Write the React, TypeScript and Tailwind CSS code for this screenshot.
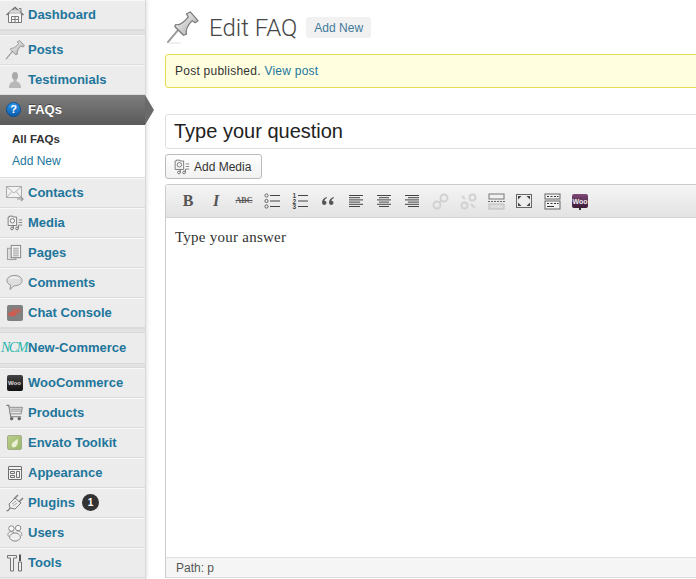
import React from "react";

const S = ({ children, size = 20, vb = "0 0 20 20", className = "" }: { children: React.ReactNode; size?: number; vb?: string; className?: string }) => (
  <svg width={size} height={size} viewBox={vb} className={className} fill="none">{children}</svg>
);

const G = "#7a7a7a";
const Pin = ({ big }: { big?: boolean }) => (
  <S size={big ? 33 : 20} vb="0 0 34 34">
    <defs>
      <linearGradient id={big ? "pb" : "ps"} x1="0" y1="0" x2="1" y2="1">
        <stop offset="0" stopColor="#f8f8f8" />
        <stop offset="1" stopColor="#a8a8a8" />
      </linearGradient>
    </defs>
    <path d="M2 32 L13 19" stroke="#9a9a9a" strokeWidth="2" strokeLinecap="round" />
    <path d="M10 14 C14 15 19 11 23 6 L21 3 L25 1 L33 10 L30 12 L27 10 C23 14 20 19 21 24 L18 25 L9 16 Z" fill={`url(#${big ? "pb" : "ps"})`} stroke="#777" strokeWidth="1.2" strokeLinejoin="round" />
    <path d="M2 33 H15" stroke="#ddd" strokeWidth="1" />
  </S>
);

const icons: Record<string, React.ReactNode> = {
  dashboard: (
    <S size={18} vb="0 0 18 18">
      <path d="M0.5 9 L9 1.5 L17.5 9" stroke="#707070" strokeWidth="1.4" />
      <path d="M5 4 L9 4 L13 4 L15 7 H3 Z" fill="#ddd" stroke="#999" strokeWidth="0.6" />
      <path d="M2.5 8 V16.5 H15.5 V8" stroke={G} fill="#f7f7f7" />
      <path d="M5.5 16.5 V10.5 H12.5 V16.5 M9 10.5 V16.5 M5.5 13.5 H12.5" stroke={G} />
      <path d="M13 2.5 H15 V6" stroke={G} />
    </S>
  ),
  testimonials: (
    <S size={18} vb="0 0 18 18">
      <ellipse cx="9" cy="5" rx="3" ry="4" fill="#a9a9a9" />
      <path d="M7.5 8 V10.5 C4 11.5 3 13.5 3 17 H15 C15 13.5 14 11.5 10.5 10.5 V8 Z" fill="#b8b8b8" />
    </S>
  ),
  faq: (
    <div className="flex h-[15px] w-[15px] items-center justify-center rounded-full border border-[#0a4f96] bg-gradient-to-b from-[#2f97e8] to-[#0b5db0] text-[11px] font-bold leading-none text-white">?</div>
  ),
  contacts: (
    <S size={18} vb="0 0 18 18">
      <rect x="0.5" y="2.5" width="15" height="11" fill="#f2f2f2" stroke="#aaa" />
      <path d="M1 3 L8 9 L15 3 M1 13 L6 7.5 M15 13 L10 7.5" stroke="#b5b5b5" />
      <path d="M11 15 H17 M15 13 L17 15 L15 17" stroke="#999" strokeWidth="1.2" />
    </S>
  ),
  media: (
    <S size={17} vb="0 0 20 20">
      <path d="M2.5 3.5 H4 V2.5 H8 V3.5 H12.5 V13.5 H2.5 Z" stroke="#6e6e6e" fill="#f3f3f3" />
      <circle cx="7.5" cy="8" r="2.6" stroke="#6e6e6e" />
      <path d="M15 7 H19 M15 10 H19 M15 13 H19" stroke="#777" />
      <circle cx="7" cy="17" r="1.6" stroke="#666" />
      <circle cx="13" cy="17" r="1.6" stroke="#666" />
      <path d="M8.6 17 V13 M14.6 17 V13" stroke="#666" />
    </S>
  ),
  pages: (
    <S size={17} vb="0 0 18 18">
      <rect x="1.5" y="4.5" width="9" height="12" fill="#ddd" stroke="#999" />
      <rect x="5.5" y="1.5" width="10" height="13" fill="#f5f5f5" stroke="#808080" />
      <path d="M7.5 4.5 H13.5 M7.5 6.5 H13.5 M7.5 8.5 H13.5 M7.5 10.5 H13.5 M7.5 12.5 H13.5" stroke="#999" />
    </S>
  ),
  comments: (
    <S size={17} vb="0 0 18 18">
      <path d="M9 1.5 C4.5 1.5 1 3.8 1 7 C1 9.3 2.8 10.9 4.8 11.7 L4.2 16.5 L8.5 12.5 C13.5 12.5 17 10.2 17 7 C17 3.8 13.5 1.5 9 1.5 Z" fill="#dedede" stroke="#8f8f8f" />
      <path d="M4 5 C6 3.5 11 3.5 14 5" stroke="#fff" />
    </S>
  ),
  chat: (
    <div className="flex h-[16px] w-[16px] items-center justify-center rounded-[2px] bg-[#808080]">
      <S size={15} vb="0 0 14 14">
        <ellipse cx="8.5" cy="5.5" rx="4.5" ry="2.3" fill="#b9675e" />
        <ellipse cx="5" cy="8.5" rx="4" ry="2" fill="#cf5a4f" />
      </S>
    </div>
  ),
  woo: (
    <div className="flex h-[16px] w-[16px] items-center justify-center rounded-[2px] bg-gradient-to-b from-[#444] to-[#111] text-[6px] font-bold leading-none text-[#ddd]">Woo</div>
  ),
  products: (
    <S size={17} vb="0 0 18 18">
      <path d="M0.5 1.5 H3 L5 13.5 H16" stroke="#777" strokeWidth="1.2" />
      <path d="M3.5 3.5 H17.5 L16 10.5 H4.5 Z" fill="#e4e4e4" stroke="#8a8a8a" />
      <path d="M5 5.5 H16.5 M5 7.5 H16" stroke="#999" />
      <circle cx="6" cy="15.5" r="1.8" fill="#666" />
      <circle cx="14" cy="15.5" r="1.8" fill="#666" />
    </S>
  ),
  envato: (
    <div className="flex h-[15px] w-[15px] items-center justify-center rounded-[2px] border border-[#a3ad8c] bg-gradient-to-br from-[#b8cc8a] to-[#9bb868]">
      <S size={10} vb="0 0 10 10">
        <path d="M7.5 0.5 C8.5 4 7.5 9 4 9.5 C1.5 9.5 1 7 2.5 5 C4 3 6.5 2.5 7.5 0.5 Z" fill="#eaf0d6" />
      </S>
    </div>
  ),
  appearance: (
    <S size={16} vb="0 0 16 16">
      <rect x="1.5" y="1.5" width="13" height="13" rx="0.5" fill="#f3f3f3" stroke="#6e6e6e" />
      <path d="M1.5 4.5 H14.5" stroke="#6e6e6e" />
      <path d="M3.5 6.5 H7.5 V8.5 H3.5 Z M3.5 10.5 H7.5 V12.5 H3.5 Z M9.5 6.5 H12.5 V12.5 H9.5 Z" stroke="#6e6e6e" />
    </S>
  ),
  plugins: (
    <S size={18} vb="0 0 18 18">
      <path d="M0.5 17 C2 17 3 16 4 14" stroke="#777" strokeWidth="1.2" />
      <path d="M4 14 L3 10 L9 4 L15 9 L9 15 Z" fill="#eee" stroke="#808080" />
      <path d="M8 5 L12 1 M13 8 L17 4" stroke="#808080" strokeWidth="1.5" />
      <path d="M6 10 L10 7 M7 12 L11 9" stroke="#aaa" />
    </S>
  ),
  users: (
    <S size={18} vb="0 0 20 20">
      <circle cx="6" cy="5" r="3" fill="#fafafa" stroke="#808080" />
      <circle cx="13.5" cy="4.5" r="3" fill="#fafafa" stroke="#808080" />
      <path d="M3 14 C1 11 3 8.5 6 8.5 C7 8.5 8 8.8 9 9.5 M12 8 C15 7.5 18 9 17.5 13" stroke="#808080" fill="#f5f5f5" />
      <ellipse cx="10" cy="14.5" rx="6" ry="4.5" fill="#eee" stroke="#808080" />
    </S>
  ),
  tools: (
    <S size={18} vb="0 0 18 18">
      <path d="M1.5 1.5 H10.5 V4 H7.5 V17 H4.5 V4 H1.5 Z" fill="#f0f0f0" stroke="#757575" />
      <path d="M13 0.5 H15 V7 H13 Z" fill="#555" />
      <path d="M12.5 8 H15.5 V17 H12.5 Z" fill="#eee" stroke="#707070" />
    </S>
  ),
};

type Item = { label: string; icon: React.ReactNode; badge?: string };

const Row = ({ label, icon, badge }: Item) => (
  <div className="flex h-[30px] items-center border-t border-b border-t-[#f8f8f8] border-b-[#dcdcdc] bg-[#ececec] pb-px">
    <span className="flex w-[28px] shrink-0 items-center justify-center pl-px">{icon}</span>
    <span className="text-[13px] font-bold leading-none text-[#21759b]">{label}</span>
    {badge && (
      <span className="ml-[7px] flex h-[17px] w-[17px] items-center justify-center rounded-full bg-[#333] text-[10px] font-bold leading-none text-white">{badge}</span>
    )}
  </div>
);

const Sep = () => <div className="h-[5px] border-y border-[#d9d9d9] bg-[#e3e3e3]" />;

const Sidebar = () => (
  <aside className="relative w-[146px] shrink-0 border-r border-r-[#d8d8d8] bg-[#ececec] shadow-[1px_0_4px_rgba(0,0,0,0.12)]">
    <Row label="Dashboard" icon={icons.dashboard} />
    <Sep />
    <Row label="Posts" icon={<Pin />} />
    <Row label="Testimonials" icon={icons.testimonials} />
    <div className="relative flex h-[30px] items-center bg-gradient-to-b from-[#7d7d7d] to-[#5a5a5a] pb-px pl-[6px]">
      <span className="flex w-[22px] shrink-0 items-center">{icons.faq}</span>
      <span className="text-[13px] font-bold leading-none text-white [text-shadow:0_-1px_0_rgba(0,0,0,0.4)]">FAQs</span>
      <span className="absolute left-[145px] top-0 h-0 w-0 border-y-[15px] border-l-[9px] border-y-transparent border-l-[#6a6a6a]" />
    </div>
    <div className="flex h-[53px] flex-col border-b border-b-[#dcdcdc] bg-white pl-[12px] pt-[3px] text-[12px] leading-[22px]">
      <span className="text-[11.5px] font-bold text-[#333]">All FAQs</span>
      <span className="text-[#21759b]">Add New</span>
    </div>
    <Row label="Contacts" icon={icons.contacts} />
    <Row label="Media" icon={icons.media} />
    <Row label="Pages" icon={icons.pages} />
    <Row label="Comments" icon={icons.comments} />
    <Row label="Chat Console" icon={icons.chat} />
    <Sep />
    <div className="flex h-[30px] items-center bg-[#ececec] pb-px">
      <span className="w-[28px] shrink-0 pl-px font-['Liberation_Serif',serif] text-[14px] italic leading-none tracking-[-1.5px] text-[#1fb5ad]">NCM</span>
      <span className="text-[13px] font-bold leading-none text-[#21759b]">New-Commerce</span>
    </div>
    <Sep />
    <Row label="WooCommerce" icon={icons.woo} />
    <Row label="Products" icon={icons.products} />
    <Row label="Envato Toolkit" icon={icons.envato} />
    <Row label="Appearance" icon={icons.appearance} />
    <Row label="Plugins" icon={icons.plugins} badge="1" />
    <Row label="Users" icon={icons.users} />
    <Row label="Tools" icon={icons.tools} />
  </aside>
);

const Tool = ({ children, w = 24 }: { children: React.ReactNode; w?: number }) => (
  <span className="flex h-[20px] shrink-0 items-center justify-center" style={{ width: w }}>{children}</span>
);

const Lines = ({ kind }: { kind: "l" | "c" | "r" }) => {
  const rows = [0, 1, 2, 3, 4, 5];
  return (
    <S size={16} vb="0 0 16 16">
      {rows.map((i) => {
        const short = i % 2 === 1;
        const x1 = kind === "l" ? 1 : kind === "c" ? (short ? 3 : 1) : short ? 4 : 1;
        const x2 = kind === "l" ? (short ? 12 : 15) : kind === "c" ? (short ? 13 : 15) : 15;
        return <path key={i} d={`M${x1} ${2.5 + i * 2.2} H${x2}`} stroke="#444" />;
      })}
    </S>
  );
};

const Gap = ({ w = 4 }: { w?: number }) => <span className="shrink-0" style={{ width: w }} />;

const Toolbar = () => (
  <div className="flex h-[33px] items-center border-b border-b-[#d5d5d5] bg-gradient-to-b from-[#f5f5f5] to-[#e3e3e3] pl-[10px]">
    <Tool><span className="font-['Liberation_Serif',serif] text-[16px] font-bold text-[#555]">B</span></Tool>
    <Gap />
    <Tool><span className="font-['Liberation_Serif',serif] text-[16px] font-bold italic text-[#555]">I</span></Tool>
    <Gap />
    <Tool><span className="font-['Liberation_Serif',serif] text-[8px] font-bold text-[#555] line-through">ABC</span></Tool>
    <Gap />
    <Tool>
      <S size={16} vb="0 0 16 16">
        {[2.5, 8, 13.5].map((y) => (
          <g key={y}>
            <circle cx="2.5" cy={y} r="1.6" stroke="#666" />
            <path d={`M6 ${y} H16`} stroke="#444" />
          </g>
        ))}
      </S>
    </Tool>
    <Gap />
    <Tool>
      <S size={16} vb="0 0 16 16">
        {[2.5, 8, 13.5].map((y, i) => (
          <g key={y}>
            <text x="0.5" y={y + 2.5} fontSize="6.5" fontWeight="700" fill="#444" fontFamily="Liberation Sans, sans-serif">{i + 1}</text>
            <path d={`M6 ${y} H16`} stroke="#444" />
          </g>
        ))}
      </S>
    </Tool>
    <Gap />
    <Tool>
      <S size={14} vb="0 0 14 14">
        <path d="M5.5 3 C2.5 4 1 6 1 8.5 C1 10 2 11 3.2 11 C4.5 11 5.5 10 5.5 8.8 C5.5 7.6 4.6 6.8 3.4 6.8 C3.6 5.6 4.4 4.6 6 4 Z" fill="#555" />
        <path d="M12.5 3 C9.5 4 8 6 8 8.5 C8 10 9 11 10.2 11 C11.5 11 12.5 10 12.5 8.8 C12.5 7.6 11.6 6.8 10.4 6.8 C10.6 5.6 11.4 4.6 13 4 Z" fill="#555" />
      </S>
    </Tool>
    <Gap />
    <Tool><Lines kind="l" /></Tool>
    <Gap />
    <Tool><Lines kind="c" /></Tool>
    <Gap />
    <Tool><Lines kind="r" /></Tool>
    <Gap />
    <Tool>
      <S size={17} vb="0 0 17 17">
        <g stroke="#d2d2d2" strokeWidth="2" fill="none">
          <circle cx="5" cy="12" r="3.5" />
          <circle cx="12" cy="5" r="3.5" />
          <path d="M7 10 L10 7" />
        </g>
      </S>
    </Tool>
    <Gap />
    <Tool>
      <S size={17} vb="0 0 17 17">
        <g stroke="#d2d2d2" strokeWidth="2" fill="none">
          <circle cx="4.5" cy="12.5" r="3" />
          <circle cx="12.5" cy="4.5" r="3" />
          <path d="M2 3 L5 6 M15 15 L11 11" />
        </g>
      </S>
    </Tool>
    <Gap />
    <Tool>
      <S size={17} vb="0 0 17 17">
        <rect x="1" y="1" width="15" height="5" stroke="#777" fill="#f0f0f0" />
        <path d="M0 8.5 H17" stroke="#666" strokeDasharray="2 1" />
        <rect x="1" y="11" width="15" height="5" stroke="#bbb" fill="#ddd" />
      </S>
    </Tool>
    <Gap />
    <Tool>
      <S size={16} vb="0 0 16 16">
        <rect x="0.5" y="1.5" width="15" height="13" fill="#eee" stroke="#666" />
        <path d="M2 3 H5.5 L2 6.5 Z M14 3 H10.5 L14 6.5 Z M2 13 H5.5 L2 9.5 Z M14 13 H10.5 L14 9.5 Z" fill="#444" />
      </S>
    </Tool>
    <Gap />
    <Tool>
      <S size={17} vb="0 0 17 17">
        <rect x="1" y="1" width="15" height="5" fill="#f3f3f3" stroke="#666" />
        <rect x="1" y="8" width="15" height="8" fill="#f3f3f3" stroke="#666" />
        <path d="M3 3.5 H5 M6.5 3.5 H8.5 M10 3.5 H12 M13 3.5 H14.5 M3 10.5 H5 M6.5 10.5 H8.5 M10 10.5 H12 M13 10.5 H14.5 M3 13.5 H10" stroke="#333" strokeWidth="1.2" />
      </S>
    </Tool>
    <Gap />
    <Tool>
      <div className="relative flex h-[14px] w-[16px] items-center justify-center rounded-[2px] bg-gradient-to-b from-[#7f4a78] to-[#3a1a36] text-[7px] font-bold leading-none text-[#eee]">
        Woo
        <span className="absolute -bottom-[2px] left-[7px] h-[2px] w-[2px] bg-[#333]" />
      </div>
    </Tool>
  </div>
);

export default function App() {
  return (
    <div className="flex h-[579px] w-[696px] overflow-hidden bg-white font-['Liberation_Sans',Arial,sans-serif]">
      <Sidebar />
      <main className="min-w-0 flex-1 pl-[19px]">
        <div className="w-[600px]">
          <div className="flex h-[54px] items-start">
            <span className="ml-[1px] mt-[11px]"><Pin big /></span>
            <h1 className="ml-[10px] mt-[14px] font-['Roboto',sans-serif] text-[24px] font-light leading-[28px] text-[#464646]">Edit FAQ</h1>
            <span className="ml-[9px] mt-[17px] flex h-[21px] items-center rounded-[3px] bg-[#f1f1f1] px-[8px] text-[12px] text-[#3f7a9c]">Add New</span>
          </div>
          <div className="flex h-[34px] items-center rounded-[3px] border border-[#e6db55] bg-[#ffffe0] pl-[9px] text-[12px] tracking-[0.25px] text-[#333]">
            Post published.&nbsp;<span className="text-[#21759b]">View post</span>
          </div>
          <div className="mt-[26px] flex h-[35px] items-center rounded-[3px] border border-[#dfdfdf] pb-[2px] pl-[8px] text-[20px] text-[#222]">Type your question</div>
          <div className="mt-[5px] flex h-[25px] w-[97px] items-center rounded-[3px] border border-[#bbb] bg-gradient-to-b from-[#fefefe] to-[#f2f2f2] pl-[7px] text-[12px] text-[#333]">
            <span className="mr-[4px] flex">{icons.media}</span>
            Add Media
          </div>
          <div className="mt-[5px] h-[394px] rounded-t-[3px] border border-[#ccc] border-b-[#ddd]">
            <Toolbar />
            <div className="h-[339px] bg-white pl-[9px] pt-[10px] font-['Liberation_Serif',serif] text-[15px] leading-[19px] tracking-[0.25px] text-[#333]">Type your answer</div>
            <div className="flex h-[20px] items-center border-t border-t-[#dfdfdf] bg-[#f5f5f5] pl-[10px] text-[12px] text-[#555]">Path: p</div>
          </div>
        </div>
      </main>
    </div>
  );
}
